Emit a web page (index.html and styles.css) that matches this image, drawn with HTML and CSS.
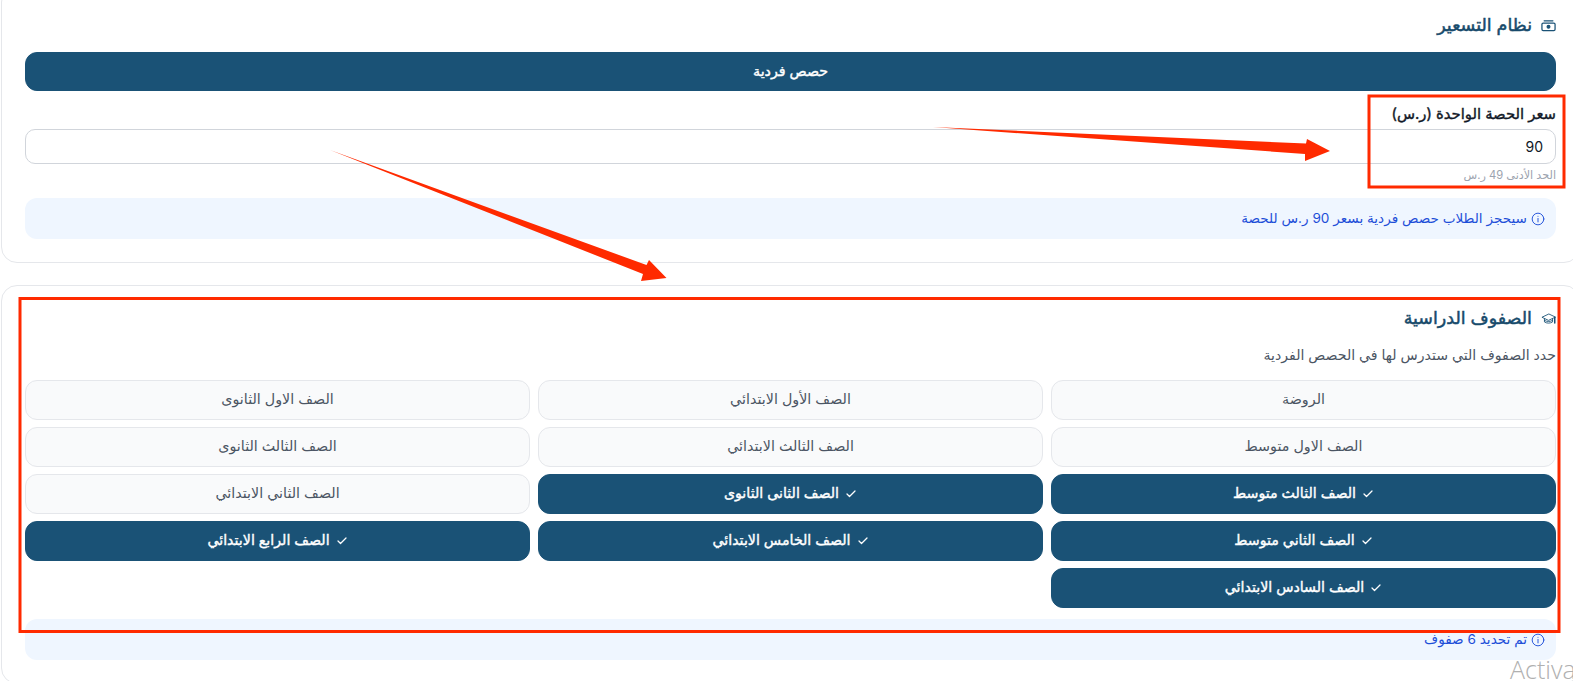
FILE: index.html
```html
<!DOCTYPE html>
<html lang="ar" dir="rtl">
<head>
<meta charset="utf-8">
<title>نظام التسعير</title>
<link rel="stylesheet" href="styles.css">
</head>
<body>
<main class="stack">
  <section class="card card-pricing">
    <h2 class="title">
      <svg class="title-icon" viewBox="0 0 24 24"><path d="M5 4.500h14"/><rect x="1.500" y="8" width="21" height="12" rx="2"/><circle class="dot" cx="12" cy="14" r="2.200"/></svg>
      <span>نظام التسعير</span>
    </h2>
    <button class="opt on single">حصص فردية</button>
    <label class="label">سعر الحصة الواحدة (ر.س)</label>
    <div class="input">90</div>
    <p class="hint">الحد الأدنى 49 ر.س</p>
    <div class="info">
      <svg class="info-icon" viewBox="0 0 24 24"><circle cx="12" cy="12" r="10"/><path d="M12 17v-6M12 7.500h.01"/></svg>
      <span>سيحجز الطلاب حصص فردية بسعر 90 ر.س للحصة</span>
    </div>
  </section>

  <section class="card card-grades">
    <h2 class="title">
      <svg class="title-icon cap" viewBox="0 0 24 24"><path d="M12 5 1.500 10 12 15l10.500-5z"/><path d="M5.500 12.500v5c3.500 2.500 9.500 2.500 13 0v-5"/><path d="M5.500 15c3.500 2.500 9.500 2.500 13 0"/><path class="tassel" d="M22 10v9"/></svg>
      <span>الصفوف الدراسية</span>
    </h2>
    <p class="desc">حدد الصفوف التي ستدرس لها في الحصص الفردية</p>
    <div class="grid">
      <button class="opt">الروضة</button>
      <button class="opt">الصف الأول الابتدائي</button>
      <button class="opt">الصف الاول الثانوى</button>
      <button class="opt">الصف الاول متوسط</button>
      <button class="opt">الصف الثالث الابتدائي</button>
      <button class="opt">الصف الثالث الثانوى</button>
      <button class="opt on"><svg class="check" viewBox="0 0 24 24"><path d="M20 6 9 17l-5-5"/></svg>الصف الثالث متوسط</button>
      <button class="opt on"><svg class="check" viewBox="0 0 24 24"><path d="M20 6 9 17l-5-5"/></svg>الصف الثانى الثانوى</button>
      <button class="opt">الصف الثاني الابتدائي</button>
      <button class="opt on"><svg class="check" viewBox="0 0 24 24"><path d="M20 6 9 17l-5-5"/></svg>الصف الثاني متوسط</button>
      <button class="opt on"><svg class="check" viewBox="0 0 24 24"><path d="M20 6 9 17l-5-5"/></svg>الصف الخامس الابتدائي</button>
      <button class="opt on"><svg class="check" viewBox="0 0 24 24"><path d="M20 6 9 17l-5-5"/></svg>الصف الرابع الابتدائي</button>
      <button class="opt on"><svg class="check" viewBox="0 0 24 24"><path d="M20 6 9 17l-5-5"/></svg>الصف السادس الابتدائي</button>
    </div>
    <div class="info info-grades">
      <svg class="info-icon" viewBox="0 0 24 24"><circle cx="12" cy="12" r="10"/><path d="M12 17v-6M12 7.500h.01"/></svg>
      <span>تم تحديد 6 صفوف</span>
    </div>
  </section>
</main>

<svg class="marks" viewBox="0 0 1573 681" aria-hidden="true">
  <rect class="box" x="1369" y="96" width="195" height="91"/>
  <rect class="box" x="20" y="298.500" width="1539" height="333"/>
  <polygon class="arrow" points="933,127 1306,143.500 1307,139 1330,151 1305,161 1305,154"/>
  <polygon class="arrow" points="330,150 646.500,265 649,260 666.500,278 641,281 643,274"/>
</svg>
<div class="watermark">Activa</div>
</body>
</html>
```
FILE: styles.css
```css
* { box-sizing: border-box; }
html, body { margin: 0; height: 100%; overflow: hidden; background: #fff; }
body {
  font-family: Inter, "DejaVu Sans", sans-serif;
  color: #111827;
  width: 1573px;
  height: 681px;
  position: relative;
}
.stack {
  display: flex;
  flex-direction: column;
  gap: 22px;
  width: 1579px;
  margin-top: -14px;
  margin-right: -7px;
}
.card {
  background: #fff;
  border: 1px solid #e5e7eb;
  border-radius: 16px;
  padding: 24px 23px 23px;
}
.title {
  display: flex;
  align-items: center;
  gap: 9px;
  height: 28px;
  margin: 0;
  font-size: 17.500px;
  line-height: 26px;
  font-weight: 400;
  -webkit-text-stroke: 0.5px #174a6b;
  color: #174a6b;
}
.title-icon {
  width: 15px;
  height: 15px;
  fill: none;
  stroke: #1a5276;
  stroke-width: 2;
  stroke-linecap: round;
  stroke-linejoin: round;
}
.dot { fill: #1a5276; }
.cap { stroke-width: 1.400; }
.tassel { stroke-width: 2.400; }
.opt {
  display: flex;
  align-items: center;
  justify-content: center;
  gap: 6px;
  height: 40px;
  padding: 0 0 3px;
  font: 400 14.300px Inter, "DejaVu Sans", sans-serif;
  color: #4b5563;
  background: #f9fafb;
  border: 1px solid #e5e7eb;
  border-radius: 12px;
}
.opt.on {
  background: #1a5276;
  border-color: #1a5276;
  color: #fff;
  font-size: 14.200px;
  -webkit-text-stroke: 0.4px #fff;
}
.single { width: 100%; height: 39px; margin-top: 13px; }
.label {
  display: block;
  margin-top: 14px;
  height: 20px;
  font-size: 14.800px;
  line-height: 18px;
  font-weight: 400;
  -webkit-text-stroke: 0.4px #111827;
  color: #111827;
}
.input {
  height: 35px;
  margin-top: 4px;
  padding: 0 12px;
  display: flex;
  align-items: center;
  font-size: 14px;
  color: #111827;
  border: 1px solid #d1d5db;
  border-radius: 10px;
}
.hint {
  margin: 3px 0 0;
  font-size: 11.200px;
  line-height: 16px;
  color: #9ca3af;
}
.info {
  display: flex;
  align-items: center;
  gap: 4px;
  height: 41px;
  margin-top: 15px;
  padding: 0 11px;
  background: #eff6ff;
  border-radius: 12px;
  font-size: 13.600px;
  color: #1d4ed8;
}
.info span { line-height: 18px; height: 20px; }
.info-icon {
  width: 14px;
  height: 14px;
  fill: none;
  stroke: #1d4ed8;
  stroke-width: 1.600;
  stroke-linecap: round;
  stroke-linejoin: round;
}
.card-grades { padding-top: 18px; }
.desc {
  margin: 13px 0 0;
  font-size: 14.100px;
  line-height: 20px;
  color: #4b5563;
}
.grid {
  display: grid;
  grid-template-columns: repeat(3, 1fr);
  gap: 7px 8px;
  margin-top: 15px;
}
.check {
  width: 12px;
  height: 12px;
  margin-top: 3px;
  fill: none;
  stroke: #fff;
  stroke-width: 2.500;
  stroke-linecap: round;
  stroke-linejoin: round;
}
.info-grades { margin-top: 11px; }
.marks {
  position: absolute;
  inset: 0;
  width: 1573px;
  height: 681px;
  pointer-events: none;
}
.box { fill: none; stroke: #ff2a00; stroke-width: 3; }
.arrow { fill: #ff2a00; }
.watermark {
  position: absolute;
  left: 1510px;
  top: 652px;
  font: 300 25px "Open Sans", sans-serif;
  color: #b0b0b0;
  direction: ltr;
}
```
